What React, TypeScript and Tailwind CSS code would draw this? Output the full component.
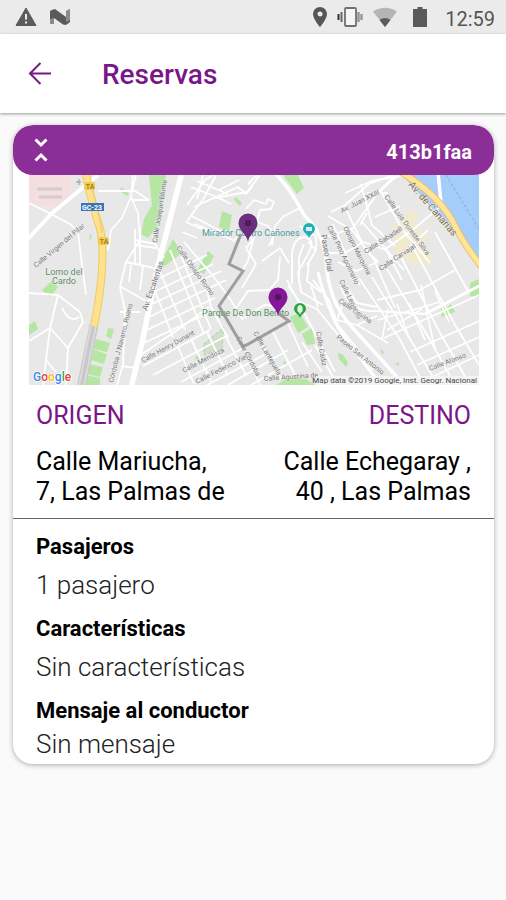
import React from "react";

function WarningIcon() {
  return (
    <svg className="h-5 w-[22px]" viewBox="0 0 22 20" aria-hidden="true">
      <path d="M11 1 21 18.500H1z" fill="#5c5c5c" stroke="#5c5c5c" strokeLinejoin="round" />
      <path d="M11 7v5.500M11 14.500v2" stroke="#ebebeb" strokeWidth="2" />
    </svg>
  );
}

function NougatIcon() {
  return (
    <svg className="h-5 w-[22px]" viewBox="0 0 22 20" aria-hidden="true">
      <path d="M1 4 5 2v15H1zM17 4l4-2v12l-4 2z" fill="#8b8b8b" />
      <path d="M1 4 6 2l11 8h4v5l-4 3-3-.5L5 11l-4 1z" fill="#5a5a5a" />
      <path d="M17 4l4-2v11l-4 2z" fill="#8b8b8b" />
    </svg>
  );
}

function LocationIcon() {
  return (
    <svg className="h-5 w-[14px]" viewBox="0 0 14 20" aria-hidden="true">
      <path d="M7 0a7 7 0 0 0-7 7c0 5 7 13 7 13s7-8 7-13a7 7 0 0 0-7-7zm0 4.500a2.500 2.500 0 1 1 0 5 2.500 2.500 0 0 1 0-5z" fill="#565656" />
    </svg>
  );
}

function VibrateIcon() {
  return (
    <svg className="h-5 w-[26px]" viewBox="0 0 26 20" aria-hidden="true">
      <rect x="8" y="1" width="11" height="18" rx="1" fill="#f5f5f5" stroke="#707070" strokeWidth="1.800" />
      <path d="M1.500 7v6" stroke="#333" strokeWidth="2" />
      <path d="M4.500 5v10" stroke="#666" strokeWidth="2" />
      <path d="M21.500 5v10M24.500 7v6" stroke="#959595" strokeWidth="2.400" />
    </svg>
  );
}

function WifiIcon() {
  return (
    <svg className="h-5 w-6" viewBox="0 0 24 20" aria-hidden="true">
      <path d="M0 4.500Q12-3 24 4.500L12 20z" fill="#b5b5b5" />
      <path d="M6.500 13q5.500-4 11 0L12 20z" fill="#5a5a5a" />
    </svg>
  );
}

function BatteryIcon() {
  return (
    <svg className="h-5 w-[14px]" viewBox="0 0 14 20" aria-hidden="true">
      <path d="M4.500 0h5v2H14v18H0V2h4.500z" fill="#5a5a5a" />
    </svg>
  );
}

function MapPin({ x, y, color }: { x: number; y: number; color: string }) {
  return (
    <g transform={`translate(${x} ${y})`}>
      <path d="M0 19C-1 11-9.500 8-9.500 0a9.500 9.500 0 0 1 19 0C9.500 8 1 11 0 19z" fill={color} />
      <circle r="3.200" fill="#4f1a5c" />
    </g>
  );
}

const streets = [
  "M29 238 51 214 80 190 98 175",
  "M51 214 29 203M51 214 70 224 78 232 82 265 86 295M29 293 58 295 50 328 29 341M58 295 80 312 83 322 68 348 66 385M50 328 68 348M50 328 46 360 43 385M46 360 56 372M62 308Q70 324 79 317",
  "M98 191 135 191 149 200M133 175 131 197 122 218 111 230 108 250M131 197 138 213 140 240 126 262 120 287 125 310 123 365 117 385M120 312 140 312M121 287 148 302M135 240 155 244 164 258M126 262 154 268M131 265 129 282M143 266 140 290M121 366 136 368",
  "M135 229 135 265M140 228 140 264M135 245 156 248M136 175 132 192M149 200 133 200",
  "M187 205 205 180 213 175M190 215 228 235M194 207 238 187 246 194 252 187M195 224 235 241M184 242 213 276 230 299 243 320M182 252 205 282 211 307 228 338",
  "M234 240 244 232 253 240 248 261 240 275M246 209 254 200 266 204 268 199 274 202 271 209 260 210 257 222 268 226 274 235 269 246M248 184 258 174M275 226 284 216 300 208M275 226 272 245M300 226 314 235",
  "M215 198 247 192 260 175M216 175 204 198 187 221M219 190 239 180M203 175 197 199",
  "M191 187 219 198 231 204M197 181 228 194M186 222 208 232M182 232 197 238",
  "M292 284V260Q291 239 304 237 317 239 307 256L298 272 301 292 323 305M299 284 299 257 304 244M308 242 316 250 309 262 307 281 321 292M315 234Q318 247 314 254L307 265M246 248 256 264 242 288M246 248 255 237M262 261 280 248 289 263M269 290 278 280 280 257",
  "M235 310 248 291 269 290 278 296M244 318 264 305 283 306M288 286 300 302 317 309 338 335M313 280 329 300 338 325 355 346 373 370M287 280 320 343 335 372M311 286 318 307",
  "M160 278 207 255M156 291 213 264M152 304 221 271M149 317 226 280M147 330 215 298M144 343 210 312M170 250 204 334M181 256 211 329M160 272 185 330M153 286 173 337",
  "M138 357 183 326 209 307M143 366 210 330M153 375 228 335M181 382 247 346M207 385 264 355M228 385 288 350M251 385 312 350M178 347 194 384M191 339 211 381M207 332 227 374M226 337 246 375M244 349 260 385M259 339 281 379M272 330 295 375M287 321 308 367M302 342 322 372M315 345 334 379",
  "M331 212 345 205 369 184 393 175M328 216 353 231 374 260 395 308M322 238 353 228 380 190M344 205 365 249 378 262M361 184 372 225 395 246M380 190 402 229 430 263M375 217 400 206M384 250 411 231 439 208M393 262 428 230M345 193 372 181 405 175M360 225 367 213M362 222 404 270",
  "M333 224 345 252 352 278M323 253 341 253 350 271 360 285M367 193 388 193M345 253 363 242 386 250 402 280M338 262 356 271 378 262",
  "M340 282Q347 313 375 311L425 314 479 286M345 285 357 303 377 307M343 304 337 320 357 325 377 316M377 300 420 290 455 270M359 278 399 338 424 385M372 277 410 339 438 385M387 269 429 338 450 376M400 255 440 333 470 385M413 247 454 323 479 365M435 232 469 293",
  "M384 338 479 295M387 330 422 309M410 352 479 321M378 320 440 302M417 365 479 337M428 379 479 355M388 309 382 339M397 304 409 338M409 303 425 340M421 285 435 350M435 291 449 322M357 325 388 343",
];

const labels: { text: string; x: number; y: number; turn: number; size?: number; color?: string }[] = [
  { text: "Calle Virgen del Pilar", x: 36, y: 268, turn: -40 },
  { text: "Av. Escaleritas", x: 147, y: 311, turn: -71, size: 8 },
  { text: "Calle Joaquín Blume", x: 157, y: 243, turn: -81 },
  { text: "Córdoba J Navarro, Ruano", x: 113, y: 383, turn: -76 },
  { text: "Calle Henry Dunant", x: 143, y: 363, turn: -29 },
  { text: "Calle Obispo Romo", x: 176, y: 248, turn: 54 },
  { text: "Calle Mendoza", x: 184, y: 373, turn: -28 },
  { text: "Calle Federico Viera", x: 197, y: 384, turn: -27 },
  { text: "Calle Córdoba", x: 236, y: 338, turn: 62 },
  { text: "Calle Lantejuela", x: 253, y: 333, turn: 60 },
  { text: "Calle Agustina de", x: 264, y: 381, turn: -4 },
  { text: "Calle Cádiz", x: 316, y: 332, turn: 80 },
  { text: "Paseo Dial", x: 321, y: 235, turn: 80, size: 8 },
  { text: "Calle Pino Apolinario", x: 327, y: 227, turn: 64 },
  { text: "Obispo Marquina", x: 343, y: 228, turn: 63 },
  { text: "Av. Juan XXIII", x: 342, y: 213, turn: -27 },
  { text: "Calle Luis Doreste Silva", x: 384, y: 197, turn: 54 },
  { text: "Calle Sabadell", x: 366, y: 254, turn: -33 },
  { text: "Calle Carvajal", x: 381, y: 271, turn: -34 },
  { text: "Calle Lepanto", x: 339, y: 281, turn: 64 },
  { text: "Calle Covina", x: 338, y: 302, turn: 34 },
  { text: "Paseo San Antonio", x: 336, y: 338, turn: 39 },
  { text: "Calle Alonso", x: 430, y: 371, turn: -21 },
  { text: "Av. de Canarias", x: 408, y: 185, turn: 49, size: 10, color: "#806b45" },
];

function RouteMap() {
  return (
    <svg className="block w-full" viewBox="29 175 450 210" role="img" aria-label="Mapa de la ruta" fontFamily="Roboto, sans-serif">
      <rect x="29" y="175" width="450" height="210" fill="#e8e8e8" />
      <path d="M29 175h42v23q-8 11-24 9l-18-5z" fill="#f4dfe0" />
      <path d="M37 189h25M39 197h23" stroke="#d5cccc" strokeWidth="3" />
      <path d="m392 226 19-17 9 6-6 8 15 16-8 9-18 11-9-9zM412 248l24 6-8 13-23-6z" fill="#f0ebcf" />
      <path d="m402 175 77 85v-85z" fill="#a5cdfb" />
      <path d="m446 175 33 54" stroke="#84abd6" strokeWidth="1" strokeDasharray="3 2" />

      <g fill="#b5e6a2">
        <path d="M149 175h17l-3 28-6 24-9 11-7-4 3-15 8-14zM121 187l8 7-2 2-7-5zM173 239l9 14-20 15-2-4zM208 251l6 5-10 18-7-3zM222 211l10 4-3 16-10-4zM236 197l6 6-2 3-6-6zM283 175h15l6 13-7 6z" />
        <path d="m42 290 10-9 6 6-8 10zM29 325l6-4 3 8-9 6zM108 328l6 1-3 10-5-3zM96 339l14 4-3 9-14-3zM94 350l13 4-3 10-13-4zM89 364l14 3-3 10-13-3zM85 375l15 3v7H84z" />
        <path d="m290 317 10-4 8 14-10 6zM302 334l10-6 3 16-8 1zM276 385l10-6h20l9 6zM197 355l4 4-3 2-3-3zM470 283l9-4v18l-9-1zM441 309l3-5 3 4 4-4 4 8-13 5zM338 353l4 1 6 8-2 5-7-8zM380 348l4 4-2 3zM395 364l4-2v4zM284 360l3 5-4-1zM90 233l2 4-3 4z" />
      </g>
      <path d="m204 344 20-17-2 22-18 6z" fill="#cfdfca" stroke="#b2cfab" strokeDasharray="3 2" />

      <g fill="none" stroke="#fff" strokeWidth="1.800" strokeLinejoin="round">
        {streets.map((d) => (
          <path key={d} d={d} />
        ))}
      </g>
      <g fill="none" stroke="#fff" strokeLinejoin="round">
        <path d="m29 238 22-24 29-24 18-15" strokeWidth="4" />
        <path d="m182 172-25 98-15 73-11 45" strokeWidth="5.500" />
        <path d="M275 173q17 18 29 42 20 20 22 45 2 41 25 66l46 51 13 10" strokeWidth="3.500" />
        <path d="M318 272q10 40 24 62l38 50M378 193l12-12 8-6M425 314l54-28" strokeWidth="3" />
        <path d="m438 172 3 31" strokeWidth="3.500" />
      </g>

      <path d="m94 325-13 63" stroke="#c9c9c9" strokeWidth="9" />
      <path d="m91 325-12 61M96 326l-12 60" stroke="#dedede" strokeWidth="1.500" />
      <path d="M86 174q7 35 14 54 7 34-6 98" fill="none" stroke="#eccb68" strokeWidth="8" />
      <path d="M86 174q7 35 14 54 7 34-6 98" fill="none" stroke="#ffe28b" strokeWidth="6" />
      <path d="M92 188q9 34 10 45" fill="none" stroke="#edce77" strokeWidth="1.500" />
      <path d="M401 172q39 24 53 52 9 19 27 42" fill="none" stroke="#e8c56a" strokeWidth="7" />
      <path d="M401 172q39 24 53 52 9 19 27 42" fill="none" stroke="#ffe49a" strokeWidth="5" />

      <rect x="81" y="203" width="23" height="8" fill="#3973b9" />
      <text x="92" y="210" textAnchor="middle" fontSize="7" fontWeight="700" fill="#fff">GC-23</text>
      <g fill="#f2ca50">
        <rect x="84" y="182" width="11" height="8" rx="2" />
        <rect x="98" y="237" width="11" height="8" rx="2" />
      </g>
      <g fontSize="7" textAnchor="middle" fill="#796126">
        <text x="90" y="189">TA</text>
        <text x="104" y="244">TA</text>
      </g>
      <path d="M76 182h5m-2-3v6" stroke="#999" />

      {labels.map((label) => (
        <text
          key={label.text}
          transform={`translate(${label.x} ${label.y}) rotate(${label.turn})`}
          fontSize={label.size ?? 7}
          fill={label.color ?? "#777"}
          stroke="#f1f1f1"
          strokeWidth="1"
          paintOrder="stroke"
        >
          {label.text}
        </text>
      ))}

      <g fontSize="9" textAnchor="middle" fill="#5f8d68" stroke="#eee" strokeWidth="1" paintOrder="stroke">
        <text x="64" y="275">Lomo del</text>
        <text x="64" y="284">Cardo</text>
      </g>
      <text x="202" y="236" fontSize="9" fill="#4b9ba3">Mirador Cuatro Cañones</text>
      <text x="202" y="316" fontSize="9" fill="#52905b">Parque De Don Benito</text>

      <path d="m241 234-12 30 14 7-24 35 24 41 46-26-11-8" fill="none" stroke="#969696" strokeOpacity=".9" strokeWidth="3" />
      <path d="M309 238c-1-4-6-5-6-9a6 6 0 0 1 12 0c0 4-5 5-6 9z" fill="#20aebc" />
      <path d="M306 227h6v4h-6z" fill="#d5f2f4" />
      <path d="M300 318c-1-4-6-5-6-9a6 6 0 0 1 12 0c0 4-5 5-6 9z" fill="#2aa43f" />
      <path d="M300 305v9m-2-5a2 3 0 0 0 4 0 2 3 0 0 0-4 0" stroke="#dcf6df" strokeWidth="1.500" fill="#dcf6df" />
      <MapPin x={248} y={223} color="#6b2f7d" />
      <MapPin x={278} y={297} color="#85189a" />

      <text x="33" y="381" fontSize="12" fontWeight="500" stroke="#fff" strokeWidth="1.500" paintOrder="stroke">
        <tspan fill="#4285f4">G</tspan>
        <tspan fill="#ea4335">o</tspan>
        <tspan fill="#fbbc05">o</tspan>
        <tspan fill="#4285f4">g</tspan>
        <tspan fill="#34a853">l</tspan>
        <tspan fill="#ea4335">e</tspan>
      </text>
      <rect x="316" y="376" width="163" height="9" fill="#f5f5f5" fillOpacity=".8" />
      <text x="477" y="383" textAnchor="end" fontSize="8" fill="#444">
        Map data ©2019 Google, Inst. Geogr. Nacional
      </text>
    </svg>
  );
}

export default function App() {
  return (
    <div className="flex min-h-screen flex-col bg-[#fafafa] font-['Roboto',sans-serif] text-black">
      <div className="flex h-[34px] items-center justify-between bg-[#ebebeb] pr-[11px] pl-[15px]">
        <div className="flex items-center gap-3">
          <WarningIcon />
          <NougatIcon />
        </div>
        <div className="flex items-center">
          <div className="flex items-center gap-[10px] pr-4">
            <LocationIcon />
            <VibrateIcon />
            <WifiIcon />
          </div>
          <BatteryIcon />
          <time className="pt-1 pl-[18px] text-xl leading-6 text-[#555]">12:59</time>
        </div>
      </div>

      <header className="flex h-[79px] items-center bg-white pb-px pl-7 shadow-[0_1px_3px_#999]">
        <button type="button" aria-label="Volver" className="flex size-6 items-center justify-center">
          <svg className="size-6" viewBox="0 0 24 24" fill="none" stroke="#7a1688" strokeWidth="2" aria-hidden="true">
            <path d="M23 12.500H2M12.500 2 2 12.500 12.500 23" />
          </svg>
        </button>
        <h1 className="pt-1 pl-[50px] text-[28px] leading-8 font-medium text-[#7a1688]">Reservas</h1>
      </header>

      <main className="pt-3 pr-3 pb-6 pl-[13px]">
        <article className="overflow-hidden rounded-[20px] bg-white shadow-[0_1px_5px_#aaa]">
          <div className="flex h-[50px] items-center justify-between rounded-[20px] bg-[#8c2e98] pr-[22px] pl-[21px] text-white">
            <button type="button" aria-label="Contraer reserva" className="flex h-6 w-[14px] items-center">
              <svg className="h-6 w-[14px]" viewBox="0 0 14 24" fill="none" stroke="#fff" strokeWidth="3" aria-hidden="true">
                <path d="m1.500 1.500 5.500 5.500 5.500-5.500M1.500 22.500 7 17l5.500 5.500" />
              </svg>
            </button>
            <h2 className="pt-1 text-xl leading-6 font-bold">413b1faa</h2>
          </div>

          <div className="pr-[15px] pl-4">
            <RouteMap />
          </div>

          <div className="grid grid-cols-2 border-b border-[#666] pt-4 pr-[23px] pb-[11px] pl-[23px] text-[25px] leading-[30px]">
            <section>
              <h3 className="text-[#7a1688]">ORIGEN</h3>
              <p className="pt-4">
                Calle Mariucha,
                <br />
                7, Las Palmas de
              </p>
            </section>
            <section className="text-right">
              <h3 className="text-[#7a1688]">DESTINO</h3>
              <p className="pt-4">
                Calle Echegaray ,
                <br />
                40 , Las Palmas
              </p>
            </section>
          </div>

          <dl className="px-[23px] pt-[13px] pb-[5px] text-[26px] leading-[30px] font-light text-[#222]">
            <dt className="text-[22px] font-bold text-black">Pasajeros</dt>
            <dd className="pt-2 pb-[14px]">1 pasajero</dd>
            <dt className="text-[22px] font-bold text-black">Características</dt>
            <dd className="pt-2 pb-[14px]">Sin características</dd>
            <dt className="text-[22px] font-bold text-black">Mensaje al conductor</dt>
            <dd className="pt-[3px]">Sin mensaje</dd>
          </dl>
        </article>
      </main>
    </div>
  );
}
